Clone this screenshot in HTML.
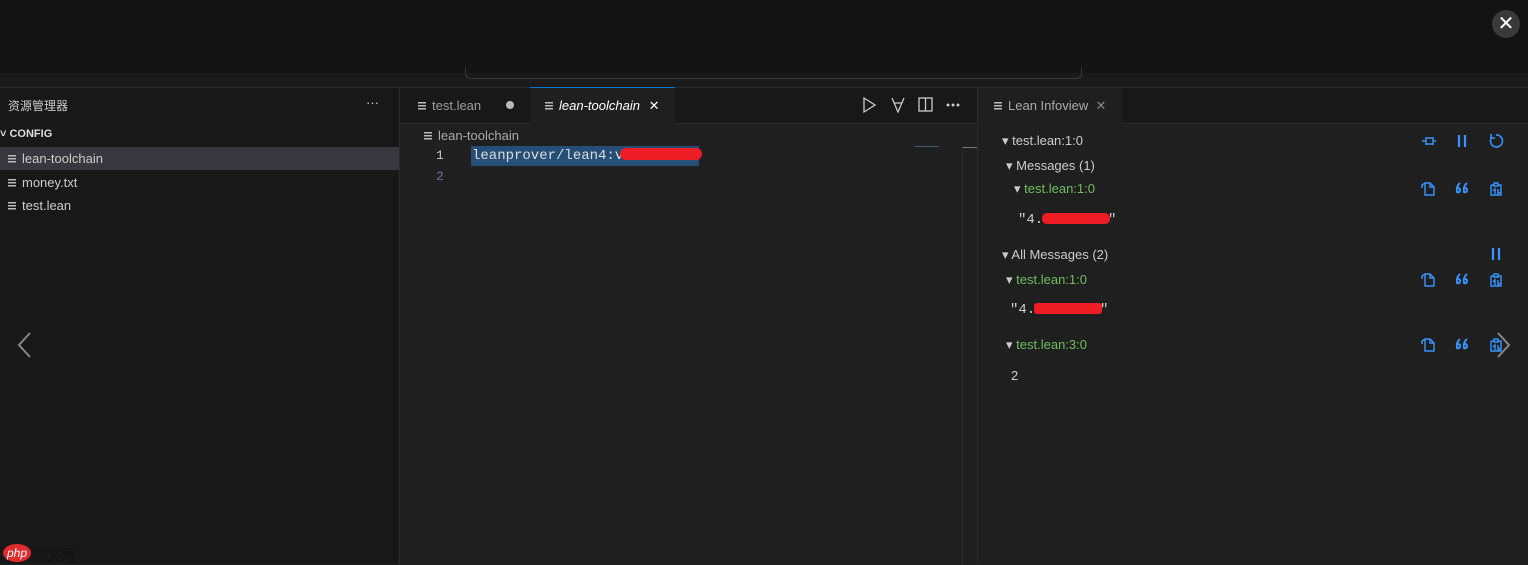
<!DOCTYPE html><html><head><meta charset="utf-8"><style>
body{margin:0;width:1528px;height:564px;overflow:hidden;background:#1f1f1f;font-family:"Liberation Sans","Noto Sans CJK SC",sans-serif;color:#ccc;font-size:13px;position:relative}
.a{position:absolute}
.fi{display:inline-block;width:8px;height:9px;background:repeating-linear-gradient(#bbb 0 1.5px,transparent 1.5px 3px);vertical-align:middle;margin-right:6px}
.g{color:#6fbf5d}
.mono{font-family:"Liberation Mono",monospace}
svg.i{position:absolute;width:16px;height:16px;fill:none;stroke:#3794ff;stroke-width:1.4}
</style></head><body>
<div class="a" style="left:0;top:0;width:1528px;height:73px;background:#131313"></div>
<div class="a" style="left:1492px;top:10px;width:28px;height:28px;border-radius:50%;background:#3a3a3a;color:#fff;text-align:center;line-height:28px;font-size:20px">✕</div>
<div class="a" style="left:0;top:73px;width:1528px;height:14px;background:#1a1a1a;border-bottom:1px solid #2a2a2a"></div>
<div class="a" style="left:465px;top:68px;width:615px;height:10px;border:1px solid #3a3a3a;border-top:none;border-radius:0 0 6px 6px"></div>
<div class="a" style="left:0;top:88px;width:399px;height:476px;background:#181818;border-right:1px solid #2b2b2b"></div>
<div class="a" style="left:8px;top:97px;font-size:12px">资源管理器</div>
<div class="a" style="left:366px;top:95px">···</div>
<div class="a" style="left:0;top:128px;font-size:11px;font-weight:bold;color:#ddd">˅ CONFIG</div>
<div class="a" style="left:0;top:147px;width:399px;height:23px;background:#37373d"></div>
<div class="a" style="left:8px;top:151px"><span class="fi"></span>lean-toolchain</div>
<div class="a" style="left:8px;top:175px"><span class="fi"></span>money.txt</div>
<div class="a" style="left:8px;top:198px"><span class="fi"></span>test.lean</div>
<svg class="a" style="left:16px;top:332px" width="16" height="26"><path d="M14 1 L3 13 L14 25" stroke="#888" stroke-width="2" fill="none"/></svg>
<div class="a" style="left:3px;top:544px;width:28px;height:18px;border-radius:50%;background:#e02c2c;color:#fff;font-size:12px;font-style:italic;text-align:center;line-height:18px">php</div>
<div class="a" style="left:33px;top:545px;color:#111;font-size:14px">中文网</div>
<div class="a" style="left:400px;top:88px;width:577px;height:35px;background:#181818;border-bottom:1px solid #2b2b2b"></div>
<div class="a" style="left:418px;top:98px;color:#9d9d9d"><span class="fi"></span>test.lean</div>
<div class="a" style="left:506px;top:101px;width:8px;height:8px;border-radius:50%;background:#bbb"></div>
<div class="a" style="left:530px;top:87px;width:145px;height:37px;background:#1f1f1f;border-top:1px solid #0078d4"></div>
<div class="a" style="left:545px;top:98px;font-style:italic;color:#fff"><span class="fi"></span>lean-toolchain <span style="font-style:normal;margin-left:5px">✕</span></div>
<svg class="a" style="left:862px;top:96px" width="100" height="18" fill="none" stroke="#ccc" stroke-width="1.3"><path d="M2 2 L13 9 L2 16 Z"/><path d="M30 2 L36 16 L42 2 M32 7 H40"/><rect x="57" y="2" width="13" height="13"/><path d="M63.5 2 V15"/><circle cx="86" cy="9" r=".8" fill="#ccc"/><circle cx="91" cy="9" r=".8" fill="#ccc"/><circle cx="96" cy="9" r=".8" fill="#ccc"/></svg>
<div class="a" style="left:424px;top:128px;color:#aaa"><span class="fi"></span>lean-toolchain</div>
<div class="a mono" style="left:436px;top:148px;color:#ccc">1</div>
<div class="a mono" style="left:436px;top:169px;color:#6e7681">2</div>
<div class="a" style="left:471px;top:146px;width:228px;height:20px;background:#264f78"></div>
<div class="a mono" style="left:472px;top:148px;color:#ddd;font-size:14px">leanprover/lean4:v4</div>
<div class="a" style="left:620px;top:148px;width:82px;height:12px;border-radius:6px;background:#ee1c25"></div>
<div class="a" style="left:915px;top:146px;width:24px;height:1px;background:#3c5a80"></div>
<div class="a" style="left:962px;top:147px;width:15px;height:417px;border-left:1px solid #2b2b2b;border-top:1px solid #777"></div>
<div class="a" style="left:977px;top:88px;width:1px;height:476px;background:#2b2b2b"></div>
<div class="a" style="left:978px;top:88px;width:550px;height:35px;background:#181818;border-bottom:1px solid #2b2b2b"></div>
<div class="a" style="left:978px;top:88px;width:144px;height:36px;background:#1f1f1f"></div>
<div class="a" style="left:994px;top:98px;color:#aaa"><span class="fi"></span>Lean Infoview &nbsp;<span style="color:#888">✕</span></div>
<div class="a" style="left:1002px;top:133px">▾ test.lean:1:0</div>
<div class="a" style="left:1006px;top:158px">▾ Messages (1)</div>
<div class="a" style="left:1014px;top:181px"><span style="color:#ccc">▾</span> <span class="g">test.lean:1:0</span></div>
<div class="a mono" style="left:1018px;top:212px;font-size:14px">"4.</div>
<div class="a" style="left:1042px;top:213px;width:68px;height:11px;border-radius:5px;background:#ee1c25"></div>
<div class="a mono" style="left:1108px;top:212px;font-size:14px">"</div>
<div class="a" style="left:1002px;top:247px">▾ All Messages (2)</div>
<div class="a" style="left:1006px;top:272px"><span style="color:#ccc">▾</span> <span class="g">test.lean:1:0</span></div>
<div class="a mono" style="left:1010px;top:302px;font-size:14px">"4.</div>
<div class="a" style="left:1034px;top:303px;width:68px;height:11px;border-radius:3px;background:#ee1c25"></div>
<div class="a mono" style="left:1100px;top:302px;font-size:14px">"</div>
<div class="a" style="left:1006px;top:337px"><span style="color:#ccc">▾</span> <span class="g">test.lean:3:0</span></div>
<div class="a" style="left:1011px;top:368px">2</div>
<!-- top row icons -->
<svg class="i" style="left:1421px;top:133px"><path d="M1 8 H5 M5 4 V12 M5 5 H12 V11 H5 M12 4 V12 M12 8 H15"/></svg>
<svg class="i" style="left:1454px;top:133px"><path d="M5 2 V14 M11 2 V14" stroke-width="2.2"/></svg>
<svg class="i" style="left:1488px;top:133px"><path d="M4 4 A6 6 0 1 0 8 2 M3 1 V5 H7" stroke-width="1.6"/></svg>
<svg class="i" style="left:1488px;top:246px"><path d="M5 2 V14 M11 2 V14" stroke-width="2.2"/></svg>
<!-- row icon sets -->
<svg style="display:none"><defs></defs></svg>
<div class="a" style="left:1421px;top:180px">
<svg class="i" style="left:0;top:0"><path d="M4 3 H9 L13 7 V15 H4 Z M4 3 L1 5 V8 M9 3 V7 H13"/></svg>
<svg class="i" style="left:33px;top:0"><path d="M6 3 Q2 6 3 12 Q6 13 6 10 Q6 8 4 8 M13 3 Q9 6 10 12 Q13 13 13 10 Q13 8 11 8" stroke-width="2"/></svg>
<svg class="i" style="left:67px;top:0"><path d="M3 5 H6 M10 5 H13 V15 H3 V5 M6 3 H10 V6 H6 Z M7 14 V9 L5 11 M10 9 V14 L12 12"/></svg>
</div>
<div class="a" style="left:1421px;top:271px">
<svg class="i" style="left:0;top:0"><path d="M4 3 H9 L13 7 V15 H4 Z M4 3 L1 5 V8 M9 3 V7 H13"/></svg>
<svg class="i" style="left:33px;top:0"><path d="M6 3 Q2 6 3 12 Q6 13 6 10 Q6 8 4 8 M13 3 Q9 6 10 12 Q13 13 13 10 Q13 8 11 8" stroke-width="2"/></svg>
<svg class="i" style="left:67px;top:0"><path d="M3 5 H6 M10 5 H13 V15 H3 V5 M6 3 H10 V6 H6 Z M7 14 V9 L5 11 M10 9 V14 L12 12"/></svg>
</div>
<div class="a" style="left:1421px;top:336px">
<svg class="i" style="left:0;top:0"><path d="M4 3 H9 L13 7 V15 H4 Z M4 3 L1 5 V8 M9 3 V7 H13"/></svg>
<svg class="i" style="left:33px;top:0"><path d="M6 3 Q2 6 3 12 Q6 13 6 10 Q6 8 4 8 M13 3 Q9 6 10 12 Q13 13 13 10 Q13 8 11 8" stroke-width="2"/></svg>
<svg class="i" style="left:67px;top:0"><path d="M3 5 H6 M10 5 H13 V15 H3 V5 M6 3 H10 V6 H6 Z M7 14 V9 L5 11 M10 9 V14 L12 12"/></svg>
</div>
<svg class="a" style="left:1496px;top:332px" width="16" height="26"><path d="M2 1 L13 13 L2 25" stroke="#888" stroke-width="2" fill="none"/></svg>
</body></html>
